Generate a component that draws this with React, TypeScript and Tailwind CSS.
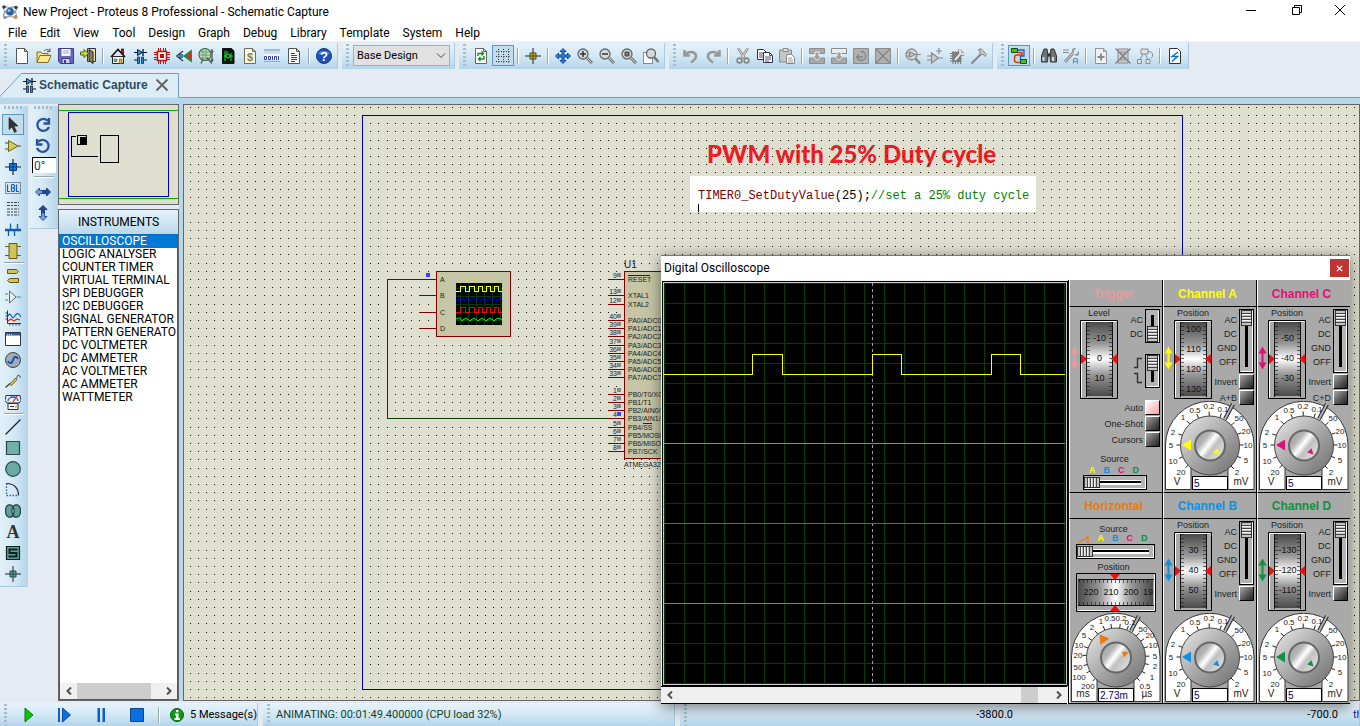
import { ReactNode } from "react";

/* ---------- icons (16 x 16 grid) ---------- */

const page = (stroke = "#555", fill = "#fff") => (
  <path d="M2.500 .5h8l3 3v12h-11z M10.500 .5v3h3" fill={fill} stroke={stroke} />
);
const lens = (inner: ReactNode) => (
  <>
    <path d="M10 10l5 5" stroke="#777" strokeWidth="3" />
    <path d="M10 10l4.500 4.500" stroke="#ccc" strokeWidth="1" />
    <circle cx="6" cy="6" r="5" fill="#d5dadd" stroke="#666" strokeWidth="1.300" />
    {inner}
  </>
);

const icons: Record<string, ReactNode> = {
  newFile: page(),
  open: (
    <>
      <path d="M1 14V4h4l1.500 1.500H12V8" fill="#f4dc7c" stroke="#8a6d1a" />
      <path d="M1 14.500L4 7.500h11l-3 7z" fill="#fbe991" stroke="#8a6d1a" />
      <path d="M8 3c2-2 4-2 6 0M14 .5v3h-3" fill="none" stroke="#555" />
    </>
  ),
  save: (
    <>
      <path d="M.5 .5h15v15h-13l-2-2z" fill="#6868b8" stroke="#3c3c88" />
      <path d="M3.500 1h9v7h-9z" fill="#f4f4fa" />
      <path d="M5 3h6M5 5h6" stroke="#a8a8c8" />
      <path d="M4 10.500h8v5H4z" fill="#d0d0dc" stroke="#3c3c88" />
      <path d="M6 12h2v3H6z" fill="#3c3c88" />
    </>
  ),
  exit: (
    <>
      <path d="M7.500 .5h8v13h-8z" fill="#e4dab4" stroke="#333" />
      <path d="M9 1.500l4 2.500v11.500l-4-3z" fill="#8c7f58" stroke="#222" />
      <path d="M.5 4h3.500V1.500L8.500 5.500 4 9.500V7H.5z" fill="#c4dc3c" stroke="#4c6610" />
    </>
  ),
  home: (
    <>
      <path d="M11.500 1h2v5h-2z" fill="#c22" stroke="#611" />
      <path d="M2.500 8.500h11v7h-11z" fill="#fffce0" stroke="#222" />
      <path d="M1 9L8 1.500 15 9" fill="none" stroke="#111" strokeWidth="1.600" />
      <path d="M4 11h3v2.500H4z" fill="#7cc0f0" stroke="#444" strokeWidth=".6" />
      <path d="M9.500 11h2.500v4.500H9.500z" fill="#f2a810" stroke="#444" strokeWidth=".6" />
    </>
  ),
  schem: (
    <>
      <path d="M2 4.500h13M2 12h3M12 12h3" stroke="#111" strokeWidth="1.200" />
      <path d="M5.500 1.500v6l5-3z" fill="#2a8fe0" stroke="#123" />
      <path d="M11 1v7" stroke="#123" strokeWidth="1.400" />
      <path d="M5.500 9h2v6.500h-2zM9.500 9h2v6.500h-2z" fill="#2a8fe0" stroke="#123" strokeWidth=".8" />
    </>
  ),
  chip: (
    <>
      <path d="M4.500 0v16M6.500 0v16M9.500 0v16M11.500 0v16M0 4.500h16M0 6.500h16M0 9.500h16M0 11.500h16" stroke="#c81010" />
      <path d="M3.500 3.500h9v9h-9z" fill="#fff" stroke="#c81010" strokeWidth="1.500" />
      <path d="M6 6h4v4H6z" fill="#c81010" />
    </>
  ),
  view3d: (
    <>
      <path d="M7 3L.5 8 7 13M4 5.500v5" fill="none" stroke="#333" strokeWidth="1.200" />
      <circle cx="5" cy="8" r="2" fill="#2a8fe0" stroke="#235" strokeWidth=".6" />
      <path d="M7.500 8L15.500 2v12z" fill="#0b9640" stroke="#073" strokeWidth=".6" />
      <path d="M12 6l3.500-2.500v9L12 10z" fill="#d03020" />
    </>
  ),
  explore: (
    <>
      <circle cx="7" cy="6.500" r="6" fill="#c4dcc4" stroke="#3b6f48" strokeWidth="1.200" />
      <path d="M3 4h9M2 7h10M3 10h8M5 2v10M8 1v11" stroke="#5a8f66" strokeWidth=".8" />
      <path d="M5 11l-2 4.500M9 10l5 5.500M14 1v13M12.500 3.500h3M12.500 12h3" fill="none" stroke="#555" strokeWidth="1.300" />
    </>
  ),
  gerber: (
    <>
      <path d="M2.500 .5h9l2.500 2.500v12.500H2.500z" fill="#061806" stroke="#111" />
      <path d="M5 3v10M7 3v3M11 5v8M4 8h2M10 8h3" stroke="#18e030" fill="none" />
      <circle cx="8" cy="8" r="2" fill="#061806" stroke="#20f040" />
    </>
  ),
  bom: (
    <>
      {page("#6a6a5a", "#fbfbea")}
      <text x="8" y="12.500" fontSize="11" textAnchor="middle" fill="#8c7f30" fontFamily="Liberation Sans" fontWeight="700">$</text>
    </>
  ),
  source: (
    <>
      <path d="M0 1h16v11H0z" fill="#eef4fa" />
      <path d="M0 1h16v2.500H0z" fill="#9ac0e4" />
      <path d="M0 5h16" stroke="#b8c8d8" />
      <path d="M.5 8.500h2v3h-2zM4.500 8.500h2v3h-2zM8.500 8v4M10.500 12V8.500h2V12M14.500 8v4" stroke="#34439c" fill="none" />
      <path d="M0 13.500h16" stroke="#9ab" />
    </>
  ),
  notes: (
    <>
      {page()}
      <path d="M5 5.500h4M5 7.500h6M5 9.500h6M5 11.500h6M5 13.500h4" stroke="#444" />
    </>
  ),
  help: (
    <>
      <circle cx="8" cy="8" r="7.500" fill="#1c50b8" stroke="#123a86" />
      <path d="M2 6a6.500 5 0 0 1 12 0z" fill="#5a8ae0" />
      <text x="8" y="13" fontSize="13" textAnchor="middle" fill="#fff" fontFamily="Liberation Sans" fontWeight="700">?</text>
    </>
  ),
  refresh: (
    <>
      {page("#666")}
      <path d="M5 8V5.500h5M8.500 3.500l2 2-2 2M11 8v3H6M7.500 9l-2 2 2 2" fill="none" stroke="#169016" strokeWidth="1.400" />
    </>
  ),
  grid: <path d="M1 3.500h14M1 8.500h14M1 13.500h14M3.500 1v14M8.500 1v14M13.500 1v14" stroke="#333" strokeDasharray="1 1.500" />,
  origin: (
    <>
      <path d="M0 8h16M8 0v16" stroke="#222" />
      <path d="M5 5h6v6H5z" fill="#c8b92a" stroke="#4c4610" />
      <path d="M5 8h6M8 5v6" stroke="#4c4610" />
    </>
  ),
  pan: (
    <path d="M8 .5l3 3H9v3.500h3.500V5l3 3-3 3V9H9v3.500h2l-3 3-3-3h2V9H3.500v2l-3-3 3-3v2H7V3.500H5z" fill="#2f86f0" stroke="#0a3a90" strokeWidth=".9" />
  ),
  zoomIn: lens(<path d="M3 6h6M6 3v6" stroke="#333" strokeWidth="1.500" />),
  zoomOut: lens(<path d="M3 6h6" stroke="#333" strokeWidth="1.500" />),
  zoomAll: lens(<path d="M4 4h4v4H4z" fill="#777" stroke="#444" />),
  zoomArea: (
    <>
      <path d="M.5 4.500h9v11h-9z" fill="#fff" stroke="#333" strokeDasharray="1 1" />
      <path d="M11 9l4.500 5" stroke="#777" strokeWidth="2.600" />
      <circle cx="8" cy="5.500" r="4.500" fill="#d5dadd" stroke="#666" strokeWidth="1.300" />
    </>
  ),
  undo: <path d="M1.500 2v5.500H7M2 7c3-4 10-4 11 .5 .5 3-2 5-5 7" fill="none" stroke="#989898" strokeWidth="2.600" />,
  redo: <path d="M14.500 2v5.500H9M14 7c-3-4-10-4-11 .5-.5 3 2 5 5 7" fill="none" stroke="#989898" strokeWidth="2.600" />,
  cut: (
    <>
      <path d="M3 0l6.500 10M13 0L6.500 10" stroke="#8a8a8a" strokeWidth="2.400" />
      <path d="M3 0l6.500 10M13 0L6.500 10" stroke="#e4e4e4" strokeWidth=".9" />
      <circle cx="4.500" cy="12.500" r="2.400" fill="none" stroke="#858585" strokeWidth="1.600" />
      <circle cx="11.500" cy="12.500" r="2.400" fill="none" stroke="#858585" strokeWidth="1.600" />
    </>
  ),
  copy: (
    <>
      <path d="M.5 1.500h6l3 3v7h-9z" fill="#fff" stroke="#335" />
      <path d="M2 5h5M2 7h5M2 9h4" stroke="#557" />
      <path d="M6.500 4.500h6l3 3v7h-9z" fill="#fff" stroke="#335" />
      <path d="M8 9h6M8 11h6M8 13h4M12.500 4.500v3h3" stroke="#557" fill="none" />
    </>
  ),
  paste: (
    <>
      <path d="M.5 2h12v12H.5z" fill="#c6c6c6" stroke="#888" />
      <path d="M4 .5h5v3H4z" fill="#e4e4e4" stroke="#888" />
      <path d="M7.500 6.500h5l3 3v6h-8z" fill="#fff" stroke="#888" />
      <path d="M9 10h4M9 12h5M9 14h5" stroke="#999" />
    </>
  ),
  blockCopy: (
    <>
      <path d="M.5 .5h15v5H.5zM.5 10h15v5.500H.5z" fill="#a9a9a9" stroke="#8c8c8c" />
      <path d="M6 4h4v4h2.500L8 12.500 3.500 8H6z" fill="#a0a0a0" stroke="#eee" />
    </>
  ),
  blockMove: (
    <>
      <path d="M.5 .5h15v5H.5z" fill="#e8eef2" stroke="#8c8c8c" />
      <path d="M.5 10h15v5.500H.5z" fill="#a9a9a9" stroke="#8c8c8c" />
      <path d="M6 4h4v4h2.500L8 12.500 3.500 8H6z" fill="#a0a0a0" stroke="#eee" />
    </>
  ),
  blockRot: (
    <>
      <path d="M.5 .5h15v15H.5z" fill="#b0b0b0" stroke="#8c8c8c" />
      <path d="M8 3.500a4.500 4.500 0 1 1-3 7.500M4 9h6M6 6.500L3.500 9 6 11.500" fill="none" stroke="#858585" strokeWidth="1.300" />
    </>
  ),
  blockDel: (
    <>
      <path d="M.5 .5h15v15H.5z" fill="#b0b0b0" stroke="#8c8c8c" />
      <path d="M1 1l14 14M15 1L1 15" stroke="#858585" strokeWidth="1.300" />
    </>
  ),
  pick: (
    <>
      <path d="M10 10l5 5.500" stroke="#888" strokeWidth="2.600" />
      <circle cx="6.500" cy="6.500" r="5.500" fill="#d3d8db" stroke="#8e8e8e" strokeWidth="1.300" />
      <path d="M4.500 3.500v6l5.500-3zM10 6.500h6M1 5h3.500M1 8h3.500" fill="#bbb" stroke="#888" />
    </>
  ),
  makeDev: (
    <path d="M4.500 5v10l7-5zM0 8h4.500M0 12h4.500M11.500 10H16M12 0v6M9 3h6" fill="#ccc" stroke="#8a8a8a" strokeWidth="1.200" />
  ),
  pkg: (
    <>
      <path d="M1 5.500h12M1 8h12M1 10.500h12M1 13h12M4 3v13M6.500 3v13M9 3v13M11.500 3v13" stroke="#777" />
      <path d="M3 4h9v10H3z" fill="#808080" />
      <path d="M6 12l6-7" stroke="#777" strokeWidth="4" />
      <path d="M11 1.500a3.500 3.500 0 0 0 4 4.500" stroke="#777" strokeWidth="3.400" />
      <path d="M6 12l6-7M11 1.500a3.500 3.500 0 0 0 4 4.500" stroke="#e6e6e6" strokeWidth="2" />
    </>
  ),
  hammer: (
    <>
      <path d="M.5 15.500L10 6" stroke="#888" strokeWidth="2.200" />
      <path d="M7 2l3-1.500 5.500 6-1.500 2-2-2.500-2 1-1.500-2 1-1.500z" fill="#c8c8c8" stroke="#888" />
    </>
  ),
  wire: (
    <>
      <path d="M6 2h7v6H9.500v4" fill="none" stroke="#1760d0" strokeWidth="1.300" />
      <path d="M6.500 4.500H11v2.500H6C4.500 7 3.500 8 3.500 9.500V12c0 1.500 1 2.500 3 2.500h3" fill="none" stroke="#e03a10" strokeWidth="1.500" />
      <path d="M.5 .5h6v4h-6zM9.500 11.500h6v4h-6z" fill="#3bc81c" stroke="#164c0c" />
    </>
  ),
  find: (
    <>
      <path d="M3 1h3l1 6-.5 7H.5V8zM13 1h-3L9 7l.5 7h6V8z" fill="#6f7376" stroke="#333" />
      <path d="M1.500 9h2v4h-2zM11 9h2v4h-2z" fill="#d8dcde" />
      <path d="M6.500 5.500h3v3h-3z" fill="#333" />
    </>
  ),
  props: (
    <>
      <path d="M0 2h6M0 4.500h6" stroke="#8b8b8b" />
      <path d="M2 14l8-9" stroke="#8b8b8b" strokeWidth="3" />
      <path d="M2 14l8-9" stroke="#ddd" />
      <path d="M10 5V1.500l2.500-1M12 7l3-.5.500-3" fill="none" stroke="#8b8b8b" strokeWidth="1.500" />
      <path d="M10.500 15.500v-4l1-1h2l1 1v4M10.500 13.500h4" fill="none" stroke="#8b8b8b" strokeWidth="1.200" />
    </>
  ),
  addSheet: (
    <>
      {page("#949494", "#eef2f4")}
      <path d="M8 5.500v7M4.500 9h7" stroke="#8b8b8b" strokeWidth="2" />
    </>
  ),
  delSheet: (
    <>
      <path d="M3 1h10v14H3z" fill="#d0d0d0" stroke="#8b8b8b" />
      <path d="M5 4h6M5 6h6M5 10h6M5 12h6" stroke="#8b8b8b" />
      <path d="M.5 .5l15 15M15.500 .5l-15 15" stroke="#858585" strokeWidth="1.500" />
    </>
  ),
  parent: (
    <>
      <path d="M4 1h7v5H4zM.5 11.500h4v4h-4zM9 11.500h4v4H9z" fill="#dfe3e5" stroke="#8b8b8b" />
      <path d="M6 6L3 11.500M8 6l3 5.500M11 3.500h2l2.500 2v3l-1.500 1.500" fill="none" stroke="#8b8b8b" />
    </>
  ),
  erc: (
    <>
      <path d="M2.500 .5h8l3 3v12h-11z" fill="#fff" stroke="#333" />
      <path d="M11 4L5 8.500h5.500L5 13.500" fill="none" stroke="#0c72d8" strokeWidth="1.500" />
    </>
  ),
  arrow: <path d="M4 .5v12l3-2.500 2.500 5.500 2-1L9 9h4z" fill="#333" stroke="#222" strokeWidth=".6" />,
  comp: (
    <>
      <path d="M0 5h4M0 11h4M12 8h4" stroke="#57550f" strokeWidth="1.200" />
      <path d="M3.500 2.500v11L13 8z" fill="#d5cb55" stroke="#6c6718" />
    </>
  ),
  junction: (
    <>
      <path d="M0 8h16M8 0v16" stroke="#123" strokeWidth="1.200" />
      <path d="M4.500 4.500h7v7h-7z" fill="#1c78d8" stroke="#0a3a80" />
      <path d="M4.500 8h7M8 4.500v7" stroke="#0a3a80" />
    </>
  ),
  lbl: (
    <>
      <path d="M.5 2.500h15v11H.5z" fill="none" stroke="#333" strokeDasharray="1 1" />
      <path d="M2.500 4.500v7H5M6.500 4.500v7M6.500 4.500h2l1 1v1.500l-1 1h-2M8.500 8l1 1v1.500l-1 1h-2M11.500 4.500v7H14" fill="none" stroke="#1760b8" strokeWidth="1.200" />
    </>
  ),
  script: <path d="M2 1.500h12M2 4.500h12M2 8h12M2 11h12M2 14h12" stroke="#444" strokeDasharray="3 1 2 1" />,
  bus: (
    <>
      <path d="M0 8h16" stroke="#0c5cb8" strokeWidth="2.500" />
      <path d="M5.500 1.500v6M12.500 2v6M3.500 8v6M9.500 8v6" stroke="#0c5cb8" strokeWidth="1.300" />
    </>
  ),
  subckt: (
    <>
      <path d="M0 3.500h16M0 12.500h16" stroke="#666030" strokeWidth="1.200" />
      <path d="M4 .5h8v15H4z" fill="#cfc455" stroke="#5f5a16" />
    </>
  ),
  terminal: (
    <>
      <path d="M2.500 1.500h9l2 2-2 2h-9z" fill="#cfc455" stroke="#5f5a16" />
      <path d="M13.500 10.500h-9l-2 2 2 2h9z" fill="#cfc455" stroke="#5f5a16" />
    </>
  ),
  pin: (
    <>
      <path d="M0 5h3M0 11h3M11.500 8H16" stroke="#2b9a9a" strokeWidth="1.200" />
      <path d="M4.500 2v12L11 8z" fill="#e8f0f2" stroke="#666" />
    </>
  ),
  graph: (
    <>
      <path d="M2.500 .5v13H16M.5 3h2M.5 6h2M.5 9h2M5 13.500v2M8 13.500v2M11 13.500v2M14 13.500v2" fill="none" stroke="#333" />
      <path d="M3 6c2-6 4 4 6 1s4-6 7 0" fill="none" stroke="#1760c8" strokeWidth="1.200" />
      <path d="M3 11l3-2 3 2 3-2 3 1" fill="none" stroke="#d83010" strokeWidth="1.200" />
    </>
  ),
  popup: (
    <>
      <path d="M.5 1.500h15v13H.5z" fill="#fff" stroke="#333" />
      <path d="M1 2h14v2.500H1z" fill="#2a5aa8" />
      <path d="M2 3.500h5" stroke="#cde" strokeDasharray="1 1" />
    </>
  ),
  gen: (
    <>
      <circle cx="8" cy="8" r="7.500" fill="#a2acb4" stroke="#444" />
      <path d="M3 9c1 3 4 3 5-1s4-4 5-1" fill="none" stroke="#0c4cb0" strokeWidth="1.800" />
    </>
  ),
  probe: (
    <>
      <path d="M.5 14.500L5 10.500" stroke="#444" strokeWidth="1.300" />
      <path d="M4.500 11.500l6-6.500 1.500 1.500-5.500 6z" fill="#d8cf55" stroke="#6c6718" />
      <path d="M11 6l2-4 2 1 .5 2" fill="none" stroke="#555" />
    </>
  ),
  instr: (
    <>
      <path d="M1 1.500h14l1 5-2 2.500H2L0 6.500z" fill="#eef" stroke="#333" />
      <path d="M3 7a5 4 0 0 1 10 0" fill="none" stroke="#1760c8" strokeWidth="1.300" />
      <path d="M8 8l4-6" stroke="#d83010" strokeWidth="1.300" />
      <path d="M3 9.500h10v6H3z" fill="#f4f4f4" stroke="#333" />
      <path d="M5 12.500h4" stroke="#333" />
      <path d="M10 11.500h2v2h-2z" fill="#f0b020" />
    </>
  ),
  line: <path d="M.5 15.500l15-15" stroke="#222" strokeWidth="1.300" />,
  box: <path d="M1.500 1.500h13v13h-13z" fill="#6fb0aa" stroke="#2b4a48" strokeWidth="1.200" />,
  circle: <circle cx="8" cy="8" r="7.300" fill="#6aa9a4" stroke="#2b4a48" strokeWidth="1.200" />,
  arc: (
    <>
      <path d="M1.500 1.500v12h12" fill="none" stroke="#1760c8" strokeDasharray="1.500 1.500" strokeWidth="1.300" />
      <path d="M1.500 1.500c8 0 12 5 12 12" fill="none" stroke="#222" strokeWidth="1.200" />
    </>
  ),
  path2d: (
    <path d="M8 4.500C7 .5.500.5.500 8s6.500 7.500 7.500 3.500c1 4 7.500 4 7.500-3.500S9 .5 8 4.500l1 2v3l-1 2-1-2v-3z" fill="#5f9f9a" stroke="#24423f" strokeWidth="1.200" />
  ),
  text: (
    <text x="8" y="14" fontSize="18" textAnchor="middle" fontFamily="Liberation Serif" fontWeight="700" fill="#333">A</text>
  ),
  symbol: (
    <>
      <path d="M1.500 1.500h13v13h-13z" fill="#5f9f9a" stroke="#122" strokeWidth="1.200" />
      <path d="M12.500 4.500h-8v3.500h7v3.500h-8" fill="none" stroke="#122" strokeWidth="2" />
    </>
  ),
  marker: (
    <>
      <path d="M0 8h16M8 0v16" stroke="#222" />
      <path d="M5 5h6v6H5z" fill="#5f9f9a" stroke="#2b4a48" />
      <path d="M5 8h6M8 5v6" stroke="#2b4a48" />
    </>
  ),
  cw: <path d="M13 4a6 6 0 1 0 1 6M14 1v5.500H8.500" fill="none" stroke="#2a5298" strokeWidth="2.300" />,
  ccw: <path d="M3 4a6 6 0 1 1-1 6M2 1v5.500h5.500" fill="none" stroke="#2a5298" strokeWidth="2.300" />,
  flipH: (
    <>
      <path d="M.5 8l4-4v2.500H8v3H4.500V12z" fill="#7ba2e0" stroke="#2a5298" />
      <path d="M15.500 8l-4-4v2.500H8v3h3.500V12z" fill="#1f4a9a" stroke="#173a7a" />
    </>
  ),
  flipV: (
    <>
      <path d="M8 .5l4 4H9.500V8h-3V4.500H4z" fill="#1f4a9a" stroke="#173a7a" />
      <path d="M8 15.500l4-4H9.500V8h-3v3.500H4z" fill="#7ba2e0" stroke="#2a5298" />
    </>
  ),
  play: <path d="M4 1v14l8-7z" fill="#0cc40c" stroke="#0a7c0a" />,
  step: (
    <>
      <path d="M2 1v14" stroke="#0b5ed0" strokeWidth="2" />
      <path d="M5.500 1v14l8-7z" fill="#0b6fdc" stroke="#0a4aa0" />
    </>
  ),
  pause: <path d="M4.500 1h2.500v14H4.500zM9.500 1H12v14H9.500z" fill="#0b5ed0" />,
  stop: <path d="M1.500 1.500h13v13h-13z" fill="#0b6fe0" stroke="#0a4590" />,
  info: (
    <>
      <circle cx="8" cy="8" r="6.500" fill="#0c9a14" stroke="#0a5a0e" />
      <path d="M7 3h2.500v2.200H7zM6 6.500h3.500V11H11v2H5.500v-2H7V8.200H6z" fill="#fff" />
    </>
  ),
};

function Icon({ name }: { name: string }) {
  return (
    <svg viewBox="0 0 16 16" className="size-4 shrink-0" fill="none" aria-hidden="true">
      {icons[name]}
    </svg>
  );
}

/* ---------- toolbars ---------- */

function ToolButton({ name, pressed }: { name: string; pressed?: boolean }) {
  return (
    <button
      type="button"
      aria-label={name}
      aria-pressed={pressed}
      className={
        pressed
          ? "flex h-[21px] w-[22px] items-center justify-center border border-[#5f97bd] bg-[#c3dcec]"
          : "flex h-[21px] w-[22px] items-center justify-center"
      }
    >
      <Icon name={name} />
    </button>
  );
}

function Grip() {
  return (
    <div className="flex w-[11px] shrink-0 justify-center self-stretch py-px">
      <div className="w-[3px] bg-[repeating-linear-gradient(180deg,#a9bccb_0_2px,transparent_2px_4px)]" />
    </div>
  );
}

function HGrip() {
  return <div className="mx-1 mt-[2px] mb-[5px] h-[3px] bg-[repeating-linear-gradient(90deg,#a9bccb_0_2px,transparent_2px_4px)]" />;
}

function Separator() {
  return (
    <div className="flex h-[21px] w-2 shrink-0 items-center justify-center">
      <div className="h-4 w-[2px] border-r border-white bg-[#9aa5ad]" />
    </div>
  );
}

function ToolGroup({ items, pressed }: { items: string[]; pressed?: string }) {
  return (
    <div className="flex h-[26px] border-r border-[#a9cbe0] bg-linear-to-b from-[#e6f2fa] via-[#d3e8f5] to-[#b3d5ea] pr-[2px]">
      <Grip />
      <div className="flex pt-[2px]">
        {items.map((n, i) => (n === "|" ? <Separator key={i} /> : <ToolButton key={i} name={n} pressed={n === pressed} />))}
      </div>
    </div>
  );
}

const mainTools = ["newFile", "open", "save", "exit", "|", "home", "schem", "chip", "view3d", "explore", "gerber", "bom", "source", "notes", "|", "help"];
const viewTools = ["refresh", "grid", "|", "origin", "|", "pan", "zoomIn", "zoomOut", "zoomAll", "zoomArea"];
const editTools = ["undo", "redo", "|", "cut", "copy", "paste", "|", "blockCopy", "blockMove", "blockRot", "blockDel", "|", "pick", "makeDev", "pkg", "hammer"];
const designTools = ["wire", "|", "find", "props", "|", "addSheet", "delSheet", "parent", "|", "erc"];
const modeTools = [
  "arrow", "comp", "junction", "lbl", "script", "bus", "subckt", "|",
  "terminal", "pin", "graph", "popup", "gen", "probe", "instr", "|",
  "line", "box", "circle", "arc", "path2d", "text", "symbol", "marker",
];

function TitleBar() {
  return (
    <header className="flex h-[23px] items-center bg-white">
      <svg viewBox="0 0 16 16" className="ml-[2px] size-4" aria-hidden="true">
        <ellipse cx="8" cy="8" rx="7.500" ry="3.500" transform="rotate(35 8 8)" fill="none" stroke="#9ab0c0" strokeWidth="1.200" />
        <ellipse cx="8" cy="8" rx="7.500" ry="3.500" transform="rotate(-35 8 8)" fill="none" stroke="#7b93a6" strokeWidth="1.200" />
        <circle cx="8" cy="7.500" r="3.800" fill="#2c5f9c" />
        <circle cx="7" cy="6.500" r="1.600" fill="#8fc0ee" />
        <circle cx="2" cy="3" r="1.800" fill="#31404c" />
        <circle cx="14" cy="3.500" r="1.800" fill="#31404c" />
        <circle cx="13.500" cy="13" r="2" fill="#c09050" />
        <circle cx="3" cy="13.500" r="1.600" fill="#889" />
      </svg>
      <h1 className="ml-[5px] text-[12px] leading-4">New Project - Proteus 8 Professional - Schematic Capture</h1>
      <div className="ml-auto flex self-start">
        <button type="button" aria-label="Minimize" className="flex h-5 w-[46px] items-center justify-center">
          <svg viewBox="0 0 12 12" className="size-3"><path d="M1 6.500h10" stroke="#000" /></svg>
        </button>
        <button type="button" aria-label="Restore" className="flex h-5 w-[46px] items-center justify-center">
          <svg viewBox="0 0 12 12" className="size-3"><path d="M1.500 3.500h7v7h-7zM3.500 3.500v-2h7v7h-2" fill="none" stroke="#000" /></svg>
        </button>
        <button type="button" aria-label="Close" className="flex h-5 w-10 items-center justify-center">
          <svg viewBox="0 0 12 12" className="size-3"><path d="M1 1l10 10M11 1L1 11" stroke="#000" /></svg>
        </button>
      </div>
    </header>
  );
}

const menus = ["File", "Edit", "View", "Tool", "Design", "Graph", "Debug", "Library", "Template", "System", "Help"];

function MenuBar() {
  return (
    <nav className="flex h-[18px] items-end gap-[13px] bg-white pl-[8px]">
      {menus.map((m) => (
        <button key={m} type="button" className="text-[12px] leading-4">{m}</button>
      ))}
    </nav>
  );
}

function ToolBars() {
  return (
    <div className="flex h-[29px] items-center gap-1 border-t border-[#f2f2f2]">
      <ToolGroup items={mainTools} />
      <div className="flex h-[26px] border-r border-[#a9cbe0] bg-linear-to-b from-[#e6f2fa] via-[#d3e8f5] to-[#b3d5ea] pr-1">
        <Grip />
        <div className="relative mt-[2px]">
          <select aria-label="Design variant" className="block h-[21px] w-[97px] appearance-none rounded-none border border-[#adadad] bg-[#e1e1e1] pl-[3px] text-[11px] leading-4">
            <option>Base Design</option>
          </select>
          <svg viewBox="0 0 10 6" className="pointer-events-none absolute top-[8px] right-[4px] h-[6px] w-[10px]"><path d="M1 .5l4 4 4-4" fill="none" stroke="#444" /></svg>
        </div>
      </div>
      <ToolGroup items={viewTools} pressed="grid" />
      <ToolGroup items={editTools} />
      <ToolGroup items={designTools} pressed="wire" />
    </div>
  );
}

function TabStrip() {
  return (
    <div className="relative flex h-[28px] items-end border-b border-[#6da0c0]">
      <svg viewBox="0 0 179 25" className="absolute bottom-[-1px] left-0 h-[25px] w-[179px]" aria-hidden="true">
        <path d="M-1 24.500L21.500 .5h157v24" fill="#dcedf7" stroke="#6da0c0" />
        <path d="M0 24.500h178" stroke="#cfe5f2" />
      </svg>
      <div className="relative flex h-6 items-center pl-[21px]">
        <Icon name="schem" />
        <span className="ml-[2px] font-['Liberation_Sans',sans-serif] text-[12px] leading-4 font-bold text-[#2d4a63]">Schematic Capture</span>
        <button type="button" aria-label="Close tab" className="ml-[7px]">
          <svg viewBox="0 0 14 14" className="size-[14px]"><path d="M1.500 1.500l11 11M12.500 1.500l-11 11" stroke="#666" strokeWidth="2" /></svg>
        </button>
      </div>
    </div>
  );
}

/* ---------- left side ---------- */

function ModeBar() {
  return (
    <div className="w-[28px] shrink-0">
      <div className="border-b border-[#a9cbe0] bg-linear-to-r from-[#e2f1f9] via-[#d3e8f5] to-[#b3d5ea] pb-[2px]">
        <HGrip />
        {modeTools.map((n, i) =>
          n === "|" ? (
            <div key={i} className="mx-1 my-px h-[2px] border-b border-white bg-[#9aa5ad]" />
          ) : (
            <div key={i} className="pl-[2px]"><ToolButton name={n} pressed={n === "arrow"} /></div>
          ),
        )}
      </div>
    </div>
  );
}

function OrientationBar() {
  return (
    <div className="ml-[2px] w-[28px] shrink-0">
      <div className="h-[123px] border-b border-[#a9cbe0] bg-linear-to-r from-[#e2f1f9] via-[#d3e8f5] to-[#b3d5ea]">
        <HGrip />
        <div className="pl-[2px]"><ToolButton name="cw" /></div>
        <div className="pl-[2px]"><ToolButton name="ccw" /></div>
        <input
          aria-label="Rotation angle"
          defaultValue="0°"
          className="mt-px ml-[2px] block h-[16px] w-[24px] rounded-none border-t border-l border-black bg-white pl-px text-[12px] leading-4 text-[#1c3f66]"
        />
        <div className="mx-1 my-[3px] h-[2px] border-b border-white bg-[#9aa5ad]" />
        <div className="pl-[2px]"><ToolButton name="flipH" /></div>
        <div className="pl-[2px]"><ToolButton name="flipV" /></div>
      </div>
    </div>
  );
}

const instruments = [
  "OSCILLOSCOPE", "LOGIC ANALYSER", "COUNTER TIMER", "VIRTUAL TERMINAL", "SPI DEBUGGER", "I2C DEBUGGER",
  "SIGNAL GENERATOR", "PATTERN GENERATO", "DC VOLTMETER", "DC AMMETER", "AC VOLTMETER", "AC AMMETER", "WATTMETER",
];

function ScrollArrow({ dir }: { dir: "left" | "right" }) {
  return (
    <button type="button" aria-label={"Scroll " + dir} className="flex h-full w-[17px] items-center justify-center">
      <svg viewBox="0 0 8 8" className="size-2">
        <path d={dir === "left" ? "M6 .5L2.500 4 6 7.500" : "M2 .5L5.500 4 2 7.500"} fill="none" stroke="#505050" strokeWidth="2" />
      </svg>
    </button>
  );
}

function SidePanels() {
  return (
    <aside className="flex w-[121px] shrink-0 flex-col">
      <div className="border border-[#666] bg-[#dfdfd0]">
        <svg viewBox="59 105 119 99" className="block h-[99px] w-full" shapeRendering="crispEdges" fill="none" aria-hidden="true">
          <path d="M59 110.500h119M59 198.500h119" stroke="#00b400" />
          <path d="M68.500 112.500h100v84h-100z" stroke="#0000c8" />
          <path d="M76 136.500h-4.500v20H98M100.500 135.500h18v27h-18zM77.500 135.500h9v9h-9z" stroke="#000" />
          <path d="M80 137h7v8h-7z" fill="#000" />
        </svg>
      </div>
      <div className="mt-1 flex flex-1 flex-col border border-[#666]">
        <h2 className="flex h-6 items-center justify-center bg-linear-to-b from-[#e6f2fa] to-[#b9d9ec] text-[12px] leading-4">INSTRUMENTS</h2>
        <div className="flex flex-1 flex-col border border-[#0a6cc0] bg-white">
          <ul className="flex-1">
            {instruments.map((n, i) => (
              <li key={n} className={i === 0 ? "bg-[#0078d7] pl-[2px] text-[12px] leading-[13px] whitespace-nowrap text-white" : "pl-[2px] text-[12px] leading-[13px] whitespace-nowrap"}>
                {n}
              </li>
            ))}
          </ul>
          <div className="flex h-[16px] bg-[#f0f0f0]">
            <ScrollArrow dir="left" />
            <div className="w-[74px] bg-[#cdcdcd]" />
            <div className="ml-auto flex"><ScrollArrow dir="right" /></div>
          </div>
        </div>
      </div>
    </aside>
  );
}

/* ---------- schematic canvas ---------- */

const dotX = [1, 9, 18, 26, 34];
const dotY = [0, 8, 17, 25, 33];

type Pin = { y: number; num: string; name: string; bar?: [number, number]; active?: boolean };
const pins: Pin[] = [
  { y: 279, num: "9", name: "RESET", bar: [0, 22] },
  { y: 295, num: "13", name: "XTAL1" },
  { y: 304, num: "12", name: "XTAL2" },
  { y: 320, num: "40", name: "PA0/ADC0" },
  { y: 328, num: "39", name: "PA1/ADC1" },
  { y: 336, num: "38", name: "PA2/ADC2" },
  { y: 345, num: "37", name: "PA3/ADC3" },
  { y: 353, num: "36", name: "PA4/ADC4" },
  { y: 361, num: "35", name: "PA5/ADC5" },
  { y: 369, num: "34", name: "PA6/ADC6" },
  { y: 377, num: "33", name: "PA7/ADC7" },
  { y: 394, num: "1", name: "PB0/T0/XCK" },
  { y: 402, num: "2", name: "PB1/T1" },
  { y: 410, num: "3", name: "PB2/AIN0/INT2" },
  { y: 418, num: "4", name: "PB3/AIN1/OC0", active: true },
  { y: 427, num: "5", name: "PB4/SS", bar: [15, 24] },
  { y: 435, num: "6", name: "PB5/MOSI" },
  { y: 443, num: "7", name: "PB6/MISO" },
  { y: 451, num: "8", name: "PB7/SCK" },
];

function Schematic() {
  return (
    <div className="relative flex-1 overflow-hidden border border-[#666] bg-[#dfdfd0]">
      <p className="absolute top-[33px] left-[523px] font-['Lato',sans-serif] text-[24px] leading-8 font-black whitespace-nowrap text-[#ed1c24]">
        PWM with 25% Duty cycle
      </p>
      <svg className="absolute inset-0 h-full w-full" fill="none" aria-label="Schematic sheet">
        <defs>
          <pattern id="dots" width="41" height="41" patternUnits="userSpaceOnUse">
            {dotY.map((y) => dotX.map((x) => <rect key={x + "-" + y} x={x} y={y} width="1" height="1" fill="#111" />))}
          </pattern>
        </defs>
        <g transform="translate(-184 -105)" fontFamily="Liberation Sans, sans-serif">
          <rect width="4000" height="3000" fill="url(#dots)" shapeRendering="crispEdges" />
          <g shapeRendering="crispEdges">
            <path d="M362.500 115.500h820v574h-820z" stroke="#0000a8" />
            <path d="M420 279.500h-32.500v139H608" stroke="#004000" />
            <path d="M419 279.500h18M419 295.500h18M419 312.500h18M419 328.500h18" stroke="#800000" />
            <path d="M436.500 271.500h74v65h-74z" fill="#c6c6a6" stroke="#800000" />
            <path d="M426 273h4v4h-4z" fill="#4040ff" />
            <path d="M456 283h46v42h-46z" fill="#000" />
            <path d="M460.500 283v42M468.500 283v42M476.500 283v42M484.500 283v42M492.500 283v42M500.500 283v42M456 288.500h46M456 296.500h46M456 304.500h46M456 312.500h46M456 320.500h46" stroke="#083808" />
            <path d="M456 291.500h4v-5h5v5h4v-5h5v5h4v-5h4v5h4v-5h4v5h4v-5h4v5h4" stroke="#ffff00" />
            <path d="M456 312.500h4v-5h5v5h4v-5h5v5h4v-5h4v5h4v-5h4v5h4v-5h4v5h4" stroke="#ff0000" />
          </g>
          <path d="M456 301l2.500-3 2 3 2.500-3 2 3 3-4 2 4 3-4 3 4 2-4 3 4 3-4 2 4 3-4 3 4 2-4 3 4 3-4 2 4" stroke="#0000ff" />
          <path d="M456 319q4-3 6 2q4-5 8 0q4-5 8 0q4-5 8 0q4-5 8 0q4-5 8 -1" stroke="#00ff00" />
          <g fontSize="7" fill="#222">
            <text x="440" y="282">A</text>
            <text x="440" y="298">B</text>
            <text x="440" y="315">C</text>
            <text x="440" y="331">D</text>
          </g>
          <path d="M624.500 271.500h150v187h-150z" fill="#c6c6a6" stroke="#800000" shapeRendering="crispEdges" />
          <text x="624" y="268" fontSize="10" fill="#222">U1</text>
          <text x="624" y="467" fontSize="7" fill="#222">ATMEGA32</text>
          {pins.map((p) => (
            <g key={p.num}>
              <path d={`M608 ${p.y + 0.5}h17`} stroke="#800000" shapeRendering="crispEdges" />
              <text x="617" y={p.y - 1} fontSize="7" textAnchor="end" fill="#222">{p.num}</text>
              <rect x="617" y={p.y - 6} width="4" height="4" fill={p.active ? "#4040ff" : "#888"} shapeRendering="crispEdges" />
              <text x="628" y={p.y + 3} fontSize="7" fill="#222">{p.name}</text>
              {p.bar && <path d={`M${628 + p.bar[0]} ${p.y - 3.5}h${p.bar[1] - p.bar[0]}`} stroke="#222" shapeRendering="crispEdges" />}
            </g>
          ))}
        </g>
      </svg>
      <div className="absolute top-[71px] left-[506px] h-[36px] w-[346px] bg-white pt-[12px] pl-2 font-['Liberation_Mono',monospace] text-[12px] leading-4 whitespace-nowrap">
        <span className="text-[#800000]">TIMER0_SetDutyValue</span>(25);<span className="text-[#008000]">//set a 25% duty cycle</span>
        <div className="h-2 w-px bg-black" />
      </div>
    </div>
  );
}

/* ---------- oscilloscope ---------- */

function Screen() {
  const lines = Array.from({ length: 21 }, (_, i) => i * 20);
  return (
    <div className="mt-px ml-px border border-black">
      <div className="border border-[#c8c8c8] bg-black">
        <svg viewBox="0 0 401 401" className="block h-[401px] w-[401px]" fill="none" shapeRendering="crispEdges" aria-label="Oscilloscope traces">
          {lines.map((p) => (
            <path key={p} d={`M${p + 0.5} 0v401M0 ${p + 0.5}h401`} stroke="#004000" />
          ))}
          <path d="M208.500 0v401" stroke="#a0a0a0" strokeDasharray="3 3" />
          <path d="M0 160.500h401" stroke="#00c8c8" />
          <path d="M0 240.500h401" stroke="#e03030" />
          <path d="M0 320.500h401" stroke="#00c840" />
          <path d="M0 91.500h88.500v-20h30v20h90v-20h29v20h90v-20h29v20h46" stroke="#ffff00" />
        </svg>
      </div>
    </div>
  );
}

function Gauge({ label, color, values, first, children }: { label: string; color: string; values: string[]; first: number; children?: ReactNode }) {
  const id = "drum-" + label.replace(/ /g, "-");
  const ticks = Array.from({ length: 19 }, (_, i) => 3 + i * 4);
  return (
    <div className="flex">
      <svg viewBox="0 0 10 92" className="h-[92px] w-[10px]" aria-hidden="true">
        <path d="M4.500 39.500l4 7h-3v9h3l-4 7-4-7h3v-9h-3z" fill={color} />
      </svg>
      <div className="w-[38px]">
        <div className="h-[13px] text-center text-[9px] leading-[13px] whitespace-nowrap text-[#222]">{children}</div>
        <div className="relative">
          <svg viewBox="0 0 38 79" className="block h-[79px] w-[38px]" aria-hidden="true">
            <defs>
              <linearGradient id={id} x1="0" y1="0" x2="0" y2="1">
                <stop offset="0" stopColor="#4a4a4a" />
                <stop offset=".3" stopColor="#9a9a9a" />
                <stop offset=".5" stopColor="#fff" />
                <stop offset=".7" stopColor="#9a9a9a" />
                <stop offset="1" stopColor="#4a4a4a" />
              </linearGradient>
            </defs>
            <path d="M.5 .5h37v78H.5z" fill="#a9a9a9" stroke="#000" />
            <path d="M1.500 77.500v-76h35" stroke="#fff" fill="none" />
            <path d="M7 2h25v74H7z" fill={`url(#${id})`} />
            <path d="M6.500 2v75M32.500 2v75" stroke="#111" />
            {ticks.map((t) => (
              <path key={t} d={`M7 ${t - 0.5}h3M32 ${t - 0.5}h-3`} stroke="#222" strokeWidth=".7" />
            ))}
            <path d="M1 34v10l6-5zM37 34v10l-6-5z" fill="#f01010" />
            <g fontSize="9" fill="#111" textAnchor="middle" fontFamily="Liberation Sans, sans-serif">
              {values.map((v, i) => (
                <text key={v} x="19.500" y={first + i * 20 + 3}>{v}</text>
              ))}
            </g>
          </svg>
          <input type="range" aria-label={label} className="absolute inset-0 m-0 h-full w-full opacity-0" />
        </div>
      </div>
    </div>
  );
}

function VSwitch({ label, height, thumb }: { label: string; height: 34 | 64; thumb: number }) {
  const low = thumb > 10;
  return (
    <div className="relative shrink-0">
      <svg viewBox={`0 0 15 ${height}`} className={height === 64 ? "block h-[64px] w-[15px]" : "block h-[34px] w-[15px]"} shapeRendering="crispEdges" fill="none" aria-hidden="true">
        <path d={`M.5 .5h14v${height - 1}h-14z`} fill="#b4b4b4" stroke="#000" />
        <path d={`M13.500 1.500v${height - 3}h-12`} stroke="#fff" />
        <path d={low ? `M7.500 6v${thumb}` : `M7.500 ${thumb + 14}V${height - 6}`} stroke="#000" strokeWidth="3" />
        <path d={`M2.500 ${thumb + 0.5}h10v15h-10z`} fill="#c4c4c4" stroke="#333" />
        <path d={`M3 ${thumb + 3.5}h9M3 ${thumb + 6.5}h9M3 ${thumb + 9.5}h9M3 ${thumb + 12.5}h9`} stroke="#444" />
        <path d={`M3 ${thumb + 4.5}h9M3 ${thumb + 7.5}h9M3 ${thumb + 10.5}h9`} stroke="#f4f4f4" />
      </svg>
      <input type="range" aria-label={label} className="absolute inset-0 m-0 h-full w-full opacity-0" />
    </div>
  );
}

function HSwitch({ label, wide }: { label: string; wide?: boolean }) {
  const w = wide ? 79 : 64;
  return (
    <div className="relative mx-auto">
      <svg viewBox={`0 0 ${w} 15`} className={wide ? "block h-[15px] w-[79px]" : "block h-[15px] w-[64px]"} shapeRendering="crispEdges" fill="none" aria-hidden="true">
        <path d={`M.5 .5h${w - 1}v14H.5z`} fill="#b4b4b4" stroke="#000" />
        <path d={`M1.500 13.500h${w - 3}V1.500`} stroke="#fff" />
        <path d={`M16 7.500h${w - 22}`} stroke="#fff" strokeWidth="5" />
        <path d={`M16 7h${w - 22}`} stroke="#000" strokeWidth="2" />
        <path d="M1.500 2.500h15v10h-15z" fill="#c4c4c4" stroke="#333" />
        <path d="M4.500 3v9M7.500 3v9M10.500 3v9M13.500 3v9" stroke="#444" />
        <path d="M5.500 3v9M8.500 3v9M11.500 3v9" stroke="#f4f4f4" />
      </svg>
      <input type="range" aria-label={label} className="absolute inset-0 m-0 h-full w-full opacity-0" />
    </div>
  );
}

function PushButton({ children, on }: { children: ReactNode; on?: boolean }) {
  return (
    <label className="flex h-[15px] items-center justify-end gap-[2px] text-[9px] leading-3 whitespace-nowrap text-[#222]">
      {children}
      <input
        type="checkbox"
        defaultChecked={on}
        className="size-[15px] shrink-0 appearance-none border border-t-white border-r-black border-b-black border-l-white bg-linear-to-br from-[#a8a8a8] to-[#222] checked:from-[#fff] checked:to-[#f0a0a0]"
      />
    </label>
  );
}

type DialLabel = [string, number, number];
const channelScale: DialLabel[] = [
  ["20", -29, 27], ["10", -37, 16], ["5", -39, 0], ["2", -37, -13], ["1", -27, -28], ["0.5", -15, -35], ["0.2", -1, -39], ["0.1", 13, -36],
  ["50", 29, -27], ["20", 36, -14], ["10", 38, 0], ["5", 36, 15], ["2", 27, 27],
];
const timeScale: DialLabel[] = [
  ["200", -28, 29], ["100", -37, 20], ["50", -38, 10], ["20", -38, -2], ["10", -37, -12], ["5", -32, -22], ["2", -24, -30], ["1", -15, -36], ["0.5", -6, -39],
  ["0.2", 5, -39], ["0.1", 14, -35], ["50", 27, -28], ["20", 34, -22], ["10", 37, -12], ["5", 39, -1], ["2", 39, 9], ["1", 36, 20], ["0.5", 29, 29],
];

function Dial({ name, color, scale, left, right, value, coarse, fine }: {
  name: string; color: string; scale: DialLabel[]; left: string; right: string; value: string; coarse: number; fine: number;
}) {
  return (
    <div className="relative ml-px h-[89px] w-[90px]">
      <svg viewBox="0 0 90 89" className="block h-[89px] w-[90px]" aria-hidden="true">
        <defs>
          <linearGradient id={"rim" + name} x1="0" y1="0" x2="1" y2="1">
            <stop offset="0" stopColor="#ececec" />
            <stop offset=".4" stopColor="#b4b4b4" />
            <stop offset="1" stopColor="#6c6c6c" />
          </linearGradient>
          <linearGradient id={"cap" + name} x1="0" y1=".1" x2="1" y2=".9">
            <stop offset="0" stopColor="#999" />
            <stop offset=".3" stopColor="#b8b8b8" />
            <stop offset=".46" stopColor="#fff" />
            <stop offset=".6" stopColor="#c0c0c0" />
            <stop offset="1" stopColor="#e8e8e8" />
          </linearGradient>
        </defs>
        <path d="M.5 88.500V44A44 43.500 0 0 1 89 44v44.500H63V44H26v44.500z" fill="#fff" stroke="#333" />
        <path d="M60 18l8-15" stroke="#222" strokeWidth="4" />
        <path d="M60 18l8.500-16" stroke="#b4b4b4" strokeWidth="2" />
        {scale.map(([, x, y], i) => {
          const r = Math.hypot(x, y);
          return <path key={i} d={`M${45 + (x / r) * 28} ${44 + (y / r) * 28}L${45 + (x / r) * 33.5} ${44 + (y / r) * 33.5}`} stroke="#222" />;
        })}
        <circle cx="45" cy="44.500" r="29.500" fill={`url(#rim${name})`} stroke="#444" />
        <circle cx="45" cy="44.500" r="15" fill={`url(#cap${name})`} stroke="#666" strokeWidth="2" />
        <path d="M17 44l9-5.500v11z" fill={color} transform={`rotate(${coarse} 45 44)`} />
        <path d="M58.500 44l-6-3v6z" fill={color} transform={`rotate(${fine} 45 44)`} />
        <g fontSize="8" fill="#222" textAnchor="middle" fontFamily="Liberation Sans, sans-serif">
          {scale.map(([t, x, y], i) => (
            <text key={i} x={45 + x} y={44 + y + 3}>{t}</text>
          ))}
          <text x="12" y="84" fontSize="10">{left}</text>
          <text x="76" y="84" fontSize="10">{right}</text>
        </g>
      </svg>
      <input
        aria-label={name + " scale"}
        defaultValue={value}
        className="absolute bottom-0 left-[27px] h-[14px] w-[36px] rounded-none border border-black bg-white pl-px font-['Liberation_Sans',sans-serif] text-[10px] leading-3 text-[#000080]"
      />
    </div>
  );
}

function Panel({ title, className, children, second }: { title: string; className: string; children: ReactNode; second?: boolean }) {
  return (
    <section className="min-w-0 border-l border-black bg-[#a9a9a9]">
      <div className={second ? "h-[27px] border-t border-b border-l border-t-black border-b-black border-l-white" : "h-[27px] border-b border-l border-b-black border-l-white pt-px"}>
        <h3 className={"pr-[5px] text-center text-[12px] leading-[27px] font-bold " + className}>{title}</h3>
      </div>
      <div className={second ? "h-[184px] border-l border-white" : "h-[185px] border-l border-white"}>{children}</div>
    </section>
  );
}

function Channel({ id, title, color, values, first, sum, second }: {
  id: string; title: string; color: string; values: string[]; first: number; sum?: string; second?: boolean;
}) {
  return (
    <Panel title={"Channel " + id} className={title} second={second}>
      <div className="flex h-[94px]">
        <Gauge label={"Position " + id} color={color} values={values} first={first}>Position</Gauge>
        <div className="flex flex-1 flex-col gap-px pt-[2px] pr-[2px]">
          <div className="flex justify-end gap-[2px]">
            <div className="pt-1 text-right text-[9px] leading-[14px] text-[#222]">
              <div>AC</div>
              <div>DC</div>
              <div>GND</div>
              <div>OFF</div>
            </div>
            <VSwitch label={"Coupling " + id} height={64} thumb={1} />
          </div>
          <PushButton>Invert</PushButton>
          {sum && <PushButton>{sum}</PushButton>}
        </div>
      </div>
      <Dial name={id} color={color} scale={channelScale} left="V" right="mV" value="5" coarse={0} fine={45} />
    </Panel>
  );
}

function SourceLetters({ ramp }: { ramp?: boolean }) {
  return (
    <div className={ramp ? "flex h-[9px] items-end justify-center gap-2 pr-[6px] text-[9px] leading-[11px] font-bold" : "flex h-[10px] items-center justify-center gap-2 pr-px text-[9px] leading-[10px] font-bold"}>
      {ramp && (
        <svg viewBox="0 0 12 8" className="h-2 w-3"><path d="M0 7l10-6v6" fill="none" stroke="#e87a10" strokeWidth="1.300" /></svg>
      )}
      <span className="text-[#ffff00]">A</span>
      <span className="text-[#1090e0]">B</span>
      <span className="text-[#e01078]">C</span>
      <span className="text-[#109040]">D</span>
    </div>
  );
}

function Trigger() {
  return (
    <Panel title="Trigger" className="text-[#e89c9c]">
      <div className="flex h-[93px]">
        <Gauge label="Trigger level" color="#e89c9c" values={["-10", "0", "10"]} first={18}>Level</Gauge>
        <div className="flex flex-1 flex-col gap-[11px] pt-[2px] pr-[2px]">
          <div className="flex justify-end gap-[2px]">
            <div className="pt-1 text-right text-[9px] leading-[14px] text-[#222]">
              <div>AC</div>
              <div>DC</div>
            </div>
            <VSwitch label="Trigger coupling" height={34} thumb={17} />
          </div>
          <div className="flex items-center justify-end gap-[3px]">
            <svg viewBox="0 0 8 28" className="h-7 w-2" aria-hidden="true">
              <path d="M0 10.500h3.500v-9H8M0 16.500h3.500v9H8" fill="none" stroke="#333" strokeWidth="1.400" />
            </svg>
            <VSwitch label="Trigger edge" height={34} thumb={1} />
          </div>
        </div>
      </div>
      <div className="flex flex-col gap-px pr-[2px]">
        <PushButton on>Auto</PushButton>
        <PushButton>One-Shot</PushButton>
        <PushButton>Cursors</PushButton>
      </div>
      <div className="flex flex-col pt-[6px] pr-[3px]">
        <div className="text-center text-[9px] leading-3 text-[#222]">Source</div>
        <SourceLetters />
        <div className="mx-auto"><HSwitch label="Trigger source" /></div>
      </div>
    </Panel>
  );
}

function Horizontal() {
  const ticks = Array.from({ length: 18 }, (_, i) => 4 + i * 4);
  return (
    <Panel title="Horizontal" className="text-[#e87a10]" second>
      <div className="flex h-[94px] flex-col items-center pt-1 pr-px">
        <div className="pr-1 text-[9px] leading-3 text-[#222]">Source</div>
        <SourceLetters ramp />
        <HSwitch label="Timebase source" wide />
        <div className="pt-[2px] pr-1 text-[9px] leading-3 text-[#222]">Position</div>
        <div className="relative">
          <svg viewBox="0 0 80 39" className="block h-[39px] w-[80px]" aria-hidden="true">
            <defs>
              <linearGradient id="drum-h">
                <stop offset="0" stopColor="#4a4a4a" />
                <stop offset=".3" stopColor="#9a9a9a" />
                <stop offset=".5" stopColor="#fff" />
                <stop offset=".7" stopColor="#9a9a9a" />
                <stop offset="1" stopColor="#4a4a4a" />
              </linearGradient>
            </defs>
            <path d="M.5 .5h79v38H.5z" fill="#a9a9a9" stroke="#000" />
            <path d="M78.500 1.500v36h-77" fill="none" stroke="#fff" />
            <path d="M2 7h75v25H2z" fill="url(#drum-h)" />
            <path d="M2 6.500h76M2 32.500h76" stroke="#111" />
            {ticks.map((t) => (
              <path key={t} d={`M${t - 0.5} 7v3M${t - 0.5} 32v-3`} stroke="#222" strokeWidth=".7" />
            ))}
            <path d="M34 1h10l-5 6zM34 38h10l-5-6z" fill="#f01010" />
            <g fontSize="9" fill="#111" textAnchor="middle" fontFamily="Liberation Sans, sans-serif">
              <text x="15" y="22">220</text>
              <text x="35" y="22">210</text>
              <text x="55" y="22">200</text>
              <text x="72" y="22">19</text>
            </g>
          </svg>
          <input type="range" aria-label="Horizontal position" className="absolute inset-0 m-0 h-full w-full opacity-0" />
        </div>
      </div>
      <Dial name="H" color="#e87a10" scale={timeScale} left="ms" right="µs" value="2.73m" coarse={54} fine={-20} />
    </Panel>
  );
}

function Oscilloscope() {
  return (
    <section className="absolute top-[158px] left-[661px] z-10 w-[689px] border-t border-[#777] bg-[#f0f0f0] font-['Liberation_Sans',sans-serif] shadow-[0_3px_14px_rgba(0,0,0,0.5)]">
      <div className="flex h-[24px] items-center justify-between bg-white pr-px pl-[3px]">
        <h2 className="font-['Roboto',sans-serif] text-[12px] leading-4">Digital Oscilloscope</h2>
        <button type="button" aria-label="Close oscilloscope" className="flex h-[18px] w-[19px] items-center justify-center bg-[#c03434]">
          <svg viewBox="0 0 8 8" className="size-[7px]"><path d="M1 1l6 6M7 1L1 7" stroke="#fff" strokeWidth="1.600" /></svg>
        </button>
      </div>
      <div className="flex">
        <div className="flex w-[407px] flex-col">
          <Screen />
          <div className="mr-px flex h-[18px] border-t border-b border-black">
            <ScrollArrow dir="left" />
            <div className="ml-auto w-[17px] bg-[#cdcdcd]" />
            <div className="ml-3"><ScrollArrow dir="right" /></div>
          </div>
        </div>
        <div className="grid flex-1 grid-cols-3 border-b border-black">
          <Trigger />
          <Channel id="A" title="text-[#ffff00]" color="#ffff00" values={["100", "110", "120", "130"]} first={9} sum="A+B" />
          <Channel id="C" title="text-[#e01078]" color="#e01078" values={["-50", "-40", "-30"]} first={18} sum="C+D" />
          <Horizontal />
          <Channel id="B" title="text-[#1090e0]" color="#1090e0" values={["30", "40", "50"]} first={18} second />
          <Channel id="D" title="text-[#109040]" color="#109040" values={["-130", "-120", "-110"]} first={18} second />
        </div>
      </div>
    </section>
  );
}

/* ---------- status bar ---------- */

function StatusBar() {
  const strip = "flex items-center border-r border-[#a9cbe0] bg-linear-to-b from-[#e6f2fa] via-[#d3e8f5] to-[#b3d5ea]";
  return (
    <footer className="flex h-[23px] gap-[5px] overflow-hidden text-[11px] leading-4 whitespace-nowrap">
      <div className={strip + " w-[258px] shrink-0"}>
        <Grip />
        {["play", "step", "pause", "stop"].map((n) => (
          <button key={n} type="button" aria-label={n} className="flex w-9 shrink-0 items-center justify-center"><Icon name={n} /></button>
        ))}
        <Separator />
        <button type="button" className="flex items-center gap-[5px] pl-[6px]"><Icon name="info" />5 Message(s)</button>
      </div>
      <div className={strip + " w-[412px] shrink-0 text-[#123f2a]"}>
        <Grip />
        <span className="pl-[2px]">ANIMATING: 00:01:49.400000 (CPU load 32%)</span>
      </div>
      <div className={strip + " flex-1 justify-end overflow-hidden"}>
        <Grip />
        <span className="flex-1" />
        <span className="w-[60px] text-right">-3800.0</span>
        <span className="w-[325px] text-right">-700.0</span>
        <span className="w-[21px] shrink-0 overflow-hidden pl-[15px] text-[#1a1aa0]">th</span>
      </div>
    </footer>
  );
}

export default function App() {
  return (
    <div className="flex h-screen flex-col overflow-hidden bg-[#e4ebf3] font-['Roboto',sans-serif] text-black">
      <TitleBar />
      <MenuBar />
      <ToolBars />
      <TabStrip />
      <main className="flex min-h-0 flex-1 flex-col">
        <div className="h-[6px] bg-[#b7d7ea]" />
        <div className="flex min-h-0 flex-1 pb-[2px]">
          <ModeBar />
          <OrientationBar />
          <SidePanels />
          <div className="w-1 bg-[#b7d7ea]" />
          <Schematic />
        </div>
      </main>
      <StatusBar />
      <div className="absolute top-[97px] left-0"><Oscilloscope /></div>
    </div>
  );
}
